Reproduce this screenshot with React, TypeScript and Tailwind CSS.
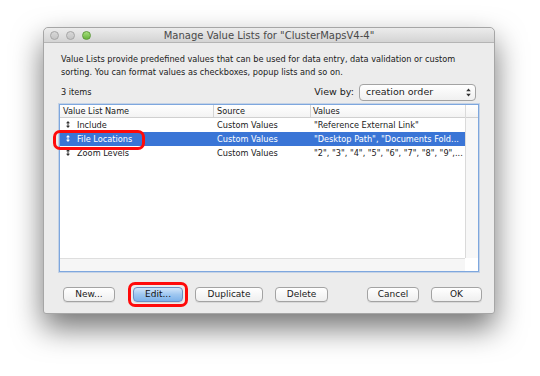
import React from 'react';

const rows = [
  { name: 'Include', source: 'Custom Values', values: '"Reference External Link"', selected: false },
  { name: 'File Locations', source: 'Custom Values', values: '"Desktop Path", "Documents Fold...', selected: true },
  { name: 'Zoom Levels', source: 'Custom Values', values: '"2", "3", "4", "5", "6", "7", "8", "9",...', selected: false },
];

const SortGrip = ({ light }: { light?: boolean }) => (
  <svg width="4" height="7" viewBox="0 0 4 7" className="shrink-0">
    <path d="M2 0 L4 2.2 H0 Z M2 7 L4 4.8 H0 Z" fill={light ? '#ffffff' : '#333333'} />
    <rect x="1.5" y="2" width="1" height="3" fill={light ? '#ffffff' : '#333333'} />
  </svg>
);

const Button = ({ label, width, primary }: { label: string; width: string; primary?: boolean }) => (
  <div
    className={`${width} shrink-0 h-[15px] flex items-center justify-center rounded-[4px] border text-[9px] leading-none ${
      primary
        ? 'border-[#6d8fc2] bg-gradient-to-b from-[#d3e6fa] via-[#9fc7f0] to-[#7db2ea] text-[#111]'
        : 'border-[#a3a3a3] bg-gradient-to-b from-white to-[#efefef] text-[#1a1a1a]'
    } shadow-[0_1px_0_rgba(0,0,0,0.08)]`}
  >
    {label}
  </div>
);

export default function App() {
  return (
    <div className="w-[540px] h-[376px] bg-white pt-[27px] pl-[43px] font-['DejaVu_Sans',sans-serif]">
      <div className="relative w-[452px] h-[287px] flex flex-col rounded-t-[5px] rounded-b-[3px] border border-[#a6a6a6] bg-[#ececec] shadow-[0_14px_30px_rgba(0,0,0,0.55)]">
        {/* title bar */}
        <div className="relative h-[15px] flex items-center rounded-t-[5px] border-b border-[#b5b5b5] bg-gradient-to-b from-[#ececec] to-[#d4d4d4] pl-[6px]">
          <div className="flex gap-[7px]">
            <span className="w-[9px] h-[9px] rounded-full border border-[#a5a5a5] bg-gradient-to-b from-[#d8d8d8] to-[#c4c4c4]" />
            <span className="w-[9px] h-[9px] rounded-full border border-[#a5a5a5] bg-gradient-to-b from-[#d8d8d8] to-[#c4c4c4]" />
            <span className="w-[9px] h-[9px] rounded-full border border-[#5e9b3b] bg-gradient-to-b from-[#a6df7c] to-[#67b339]" />
          </div>
          <div className="absolute inset-0 flex items-center justify-center text-[10px] text-[#4a4a4a]">
            Manage Value Lists for "ClusterMapsV4-4"
          </div>
        </div>

        <div className="flex-1 flex flex-col px-[15px]">
          <p className="mt-[10px] pl-[2px] text-[8.2px] leading-[12.5px] text-[#1a1a1a]">
            Value Lists provide predefined values that can be used for data entry, data validation or custom
            <br />
            sorting. You can format values as checkboxes, popup lists and so on.
          </p>

          <div className="mt-[6px] flex items-center h-[17px] pl-[2px] text-[8.2px] text-[#1a1a1a]">
            <span>3 items</span>
            <span className="ml-auto mr-[5px] text-[9.5px]">View by:</span>
            <div className="w-[117px] h-[17px] mr-[3px] flex items-center rounded-[4px] border border-[#a3a3a3] bg-gradient-to-b from-white to-[#f0f0f0] pl-[6px] pr-[4px] text-[9.5px]">
              <span>creation order</span>
              <svg width="5" height="9" viewBox="0 0 5 9" className="ml-auto">
                <path d="M2.5 0.5 L4.8 3.3 H0.2 Z M2.5 8.5 L4.8 5.7 H0.2 Z" fill="#333" />
              </svg>
            </div>
          </div>

          {/* table */}
          <div className="mt-[3px] h-[168px] flex flex-col border border-[#7ea7de] shadow-[0_0_0_1px_rgba(126,167,222,0.35)] bg-white text-[8.2px] text-[#1a1a1a]">
            <div className="flex-1 flex">
              <div className="flex-1 flex flex-col">
                <div className="h-[13px] flex items-center border-b border-[#d0d0d0] bg-gradient-to-b from-white to-[#f3f3f3]">
                  <div className="w-[154px] pl-[3px] border-r border-[#d4d4d4]">Value List Name</div>
                  <div className="w-[97px] pl-[3px] border-r border-[#d4d4d4]">Source</div>
                  <div className="flex-1 pl-[2px]">Values</div>
                </div>
                {rows.map((r) => (
                  <div
                    key={r.name}
                    className={`h-[14px] flex items-center ${r.selected ? 'bg-[#3a75d6] text-white' : ''}`}
                  >
                    <div className="w-[154px] flex items-center gap-[7px] pl-[6px]">
                      <SortGrip light={r.selected} />
                      <span>{r.name}</span>
                    </div>
                    <div className="w-[97px] pl-[3px]">{r.source}</div>
                    <div className="flex-1 pl-[3px] whitespace-nowrap overflow-hidden">{r.values}</div>
                  </div>
                ))}
              </div>
              <div className="w-[13px] flex flex-col border-l border-[#dadada] bg-[#f7f7f7]">
                <div className="h-[13px] border-b border-[#d0d0d0] bg-gradient-to-b from-white to-[#f3f3f3]" />
              </div>
            </div>
            <div className="h-[13px] flex">
              <div className="flex-1 border-t border-[#dedede] bg-[#f6f6f6]" />
              <div className="w-[13px] bg-white" />
            </div>
          </div>

          {/* buttons */}
          <div className="mt-[10px] -mr-[4px] flex items-center pl-[4px]">
            <Button label="New..." width="w-[52px]" />
            <div className="shrink-0 ml-[13px] p-[2px] rounded-[7px] border-[3px] border-[#ff0a0a]">
              <Button label="Edit..." width="w-[50px]" primary />
            </div>
            <div className="shrink-0 ml-[7px]">
              <Button label="Duplicate" width="w-[68px]" />
            </div>
            <div className="shrink-0 ml-[12px]">
              <Button label="Delete" width="w-[53px]" />
            </div>
            <div className="shrink-0 ml-[39px]">
              <Button label="Cancel" width="w-[52px]" />
            </div>
            <div className="shrink-0 ml-[12px]">
              <Button label="OK" width="w-[51px]" />
            </div>
          </div>
        </div>

        {/* annotation around the selected row */}
        <div className="absolute left-[9px] top-[102px] w-[92px] h-[20px] rounded-[7px] border-[3px] border-[#ff0a0a]" />
      </div>
    </div>
  );
}
